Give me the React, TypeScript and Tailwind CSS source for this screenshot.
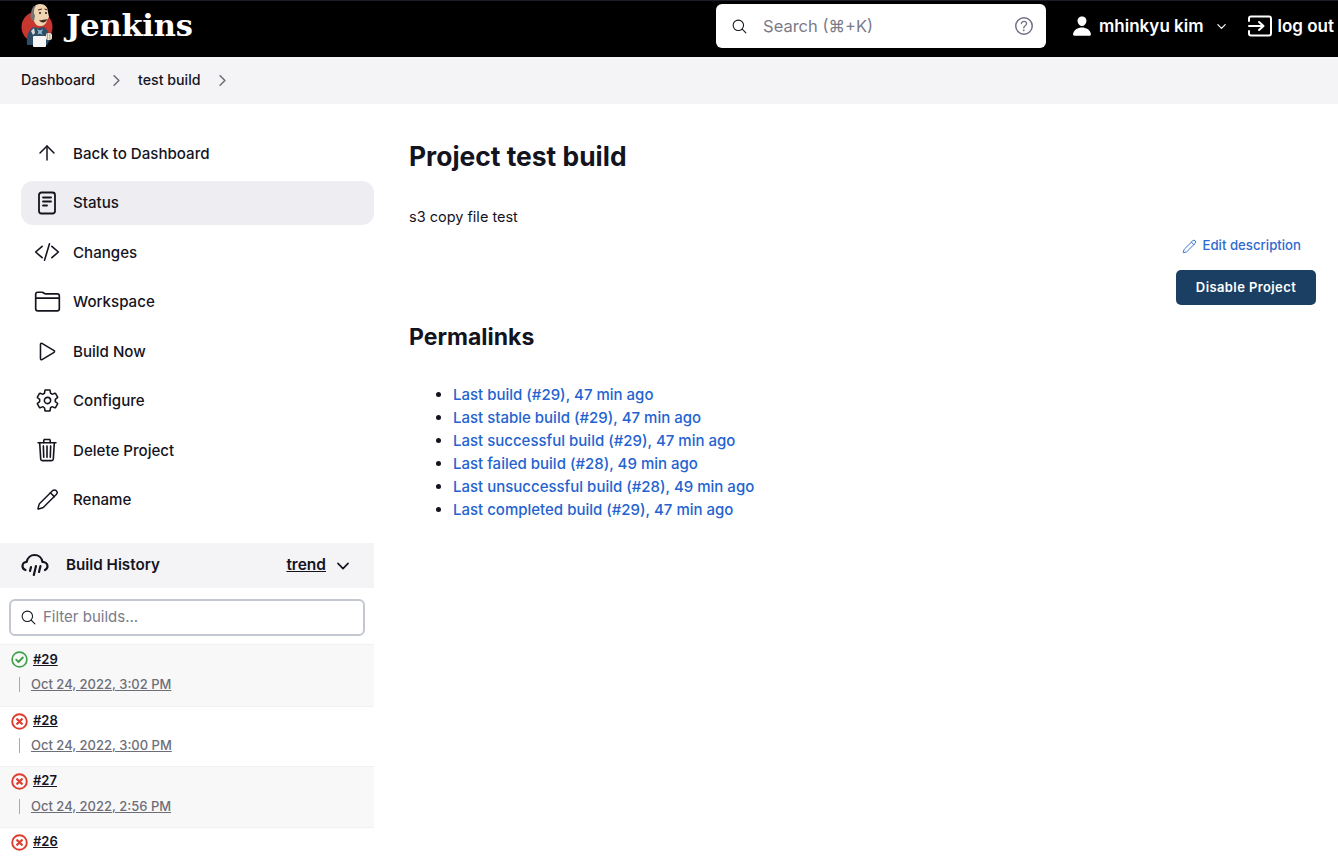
import React from "react";
import {
  IoCodeSlashOutline,
  IoFolderOutline,
  IoPlayOutline,
  IoSettingsOutline,
  IoTrashOutline,
  IoSearchOutline,
  IoHelpCircleOutline,
  IoChevronDownOutline,
  IoChevronForwardOutline,
  IoPerson,
} from "react-icons/io5";
import { ArrowUp, Pencil } from "lucide-react";

function Logo() {
  return (
    <svg width="34" height="46" viewBox="19 3 34 46" className="shrink-0">
      <circle cx="37" cy="27" r="15.500" fill="#c8372f" />
      <path d="M27 45c-1-8 1-14 6-18l5 1 6-1 3 3c2 3 3 6 3 10l-3 5z" fill="#2f4c66" />
      <path d="M32 14c0-6 3-10 8-10s8 3 8 8l1 5-2 3c-1 4-3 6-7 6-3 0-5-2-6-5l-2-3z" fill="#f0d3b0" />
      <path d="M34 6c-2 2-3 5-3 8l-1 2 2 4 2 1 1-5-1-3c0-3 0-5 2-7z" fill="#77736f" />
      <path d="M39 20c2 .5 5 0 8-1-.5 2-2 3.500-4 3.500s-3-1-4-2.500z" fill="#3a2a22" />
      <circle cx="40" cy="13" r="1" fill="#1d1919" />
      <circle cx="46" cy="13" r="1" fill="#1d1919" />
      <path d="M38 10l4-1M44.500 9l3 1" stroke="#49230f" strokeWidth="1" fill="none" />
      <path d="M37 29l3 1.500 3-1.500-1.500 3.500 1 2.500-2.500-1.500-2.500 1 1-2.500z" fill="#8fb8cf" />
      <path d="M31 31l3-3 1 5-2 2z" fill="#d8d8d8" />
      <rect x="33" y="36" width="13" height="11" rx="1" fill="#f5f5f5" />
      <rect x="46" y="33" width="6" height="7" rx="2" fill="#efe3d0" />
      <path d="M47.500 33.500v6M49.800 33.500v6" stroke="#8a8a8a" strokeWidth=".7" />
    </svg>
  );
}

function DocIcon() {
  return (
    <svg width="24" height="24" viewBox="0 0 24 24" fill="none" stroke="currentColor" strokeWidth="1.800" strokeLinecap="round" strokeLinejoin="round">
      <rect x="4" y="1.500" width="16" height="21" rx="2.500" />
      <path d="M8 6.500h8M8 10.500h8M8 14.500h4" />
    </svg>
  );
}

function LogoutIcon() {
  return (
    <svg width="26" height="22" viewBox="0 0 26 22" fill="none" stroke="white" strokeWidth="2" strokeLinecap="round" strokeLinejoin="round" className="shrink-0">
      <path d="M2 6V3.500C2 2.400 2.900 1.500 4 1.500h18c1.100 0 2 .9 2 2v15c0 1.100-.9 2-2 2H4c-1.100 0-2-.9-2-2V16" />
      <path d="M2 11h14M12 7l4.500 4-4.500 4" />
    </svg>
  );
}

function CloudRain() {
  return (
    <svg width="28" height="26" viewBox="0 0 28 26" fill="none" stroke="#14141f" strokeWidth="2.200" strokeLinecap="round" strokeLinejoin="round">
      <path d="M4.500 17C2.500 16.300 1.500 14.800 1.500 13c0-2.300 1.800-4.200 4.200-4.200C6.500 5 9.500 2 13.500 2c4.300 0 7.400 3 7.900 6.800 2.800 0 5.100 1.800 5.100 4.500 0 1.700-1 3-2.500 3.700" />
      <path d="M10 14l-1 4M15 13l-2.200 9M19.500 13l-1.500 6" />
    </svg>
  );
}

function StatusOk() {
  return (
    <svg width="17" height="17" viewBox="0 0 17 17" fill="none" className="shrink-0">
      <circle cx="8.500" cy="8.500" r="7.400" stroke="#3fa14b" strokeWidth="1.700" />
      <path d="M5.200 8.700l2.300 2.300 4.300-4.500" stroke="#3fa14b" strokeWidth="1.900" strokeLinecap="round" strokeLinejoin="round" />
    </svg>
  );
}

function StatusFail() {
  return (
    <svg width="17" height="17" viewBox="0 0 17 17" fill="none" className="mt-[2px] shrink-0">
      <circle cx="8.500" cy="8.500" r="7.300" stroke="#dc3d2f" strokeWidth="1.900" />
      <path d="M6.200 6.200l4.600 4.600M10.800 6.200l-4.600 4.600" stroke="#dc3d2f" strokeWidth="2.300" strokeLinecap="round" />
    </svg>
  );
}

const nav = [
  { label: "Back to Dashboard", icon: <ArrowUp size={24} strokeWidth={1.500} /> },
  { label: "Status", icon: <DocIcon />, active: true },
  { label: "Changes", icon: <IoCodeSlashOutline size={26} /> },
  { label: "Workspace", icon: <IoFolderOutline size={27} /> },
  { label: "Build Now", icon: <IoPlayOutline size={25} /> },
  { label: "Configure", icon: <IoSettingsOutline size={25} /> },
  { label: "Delete Project", icon: <IoTrashOutline size={26} /> },
  { label: "Rename", icon: <Pencil size={23} strokeWidth={1.500} /> },
];

const builds = [
  { id: "#29", date: "Oct 24, 2022, 3:02 PM", ok: true, h: "h-[62px] bg-[#f8f8f8] pt-[6px]", gap: "mt-[7px]" },
  { id: "#28", date: "Oct 24, 2022, 3:00 PM", ok: false, h: "h-[60px] bg-white pt-[5px]", gap: "mt-[7px]" },
  { id: "#27", date: "Oct 24, 2022, 2:56 PM", ok: false, h: "h-[61px] bg-[#f8f8f8] pt-[5px]", gap: "mt-[8px]" },
  { id: "#26", date: "", ok: false, h: "h-[61px] bg-white pt-[5px]", gap: "mt-[8px]" },
];

const links = [
  "Last build (#29), 47 min ago",
  "Last stable build (#29), 47 min ago",
  "Last successful build (#29), 47 min ago",
  "Last failed build (#28), 49 min ago",
  "Last unsuccessful build (#28), 49 min ago",
  "Last completed build (#29), 47 min ago",
];

export default function App() {
  return (
    <div className="h-[858px] w-[1338px] overflow-hidden bg-white text-[#14141f] font-['Inter',sans-serif]">
      <header className="flex h-[57px] items-center border-t border-[#1c1c2b] bg-black pb-[6px] pl-[19px] text-white">
        <Logo />
        <span className="ml-[13px] pb-[2px] font-['DejaVu_Serif',serif] text-[30.500px] font-bold leading-none tracking-[-0.2px]">Jenkins</span>
        <div className="ml-auto flex h-[44px] w-[330px] items-center rounded-[6px] bg-white pl-[15px] pr-[10px]">
          <IoSearchOutline size={17} className="text-[#14141f]" />
          <span className="ml-[15px] text-[16.500px] text-[#7b7b88]">Search (⌘+K)</span>
          <IoHelpCircleOutline size={24} className="ml-auto text-[#6f6f85]" />
        </div>
        <div className="ml-[25px] flex items-center">
          <IoPerson size={22} />
          <span className="ml-[6px] pt-[1px] text-[17px] font-semibold">mhinkyu kim</span>
          <IoChevronDownOutline size={13} className="ml-[11px]" />
          <span className="ml-[19px]"><LogoutIcon /></span>
          <span className="ml-[5px] mr-[4px] pt-[1px] text-[17px] font-semibold">log out</span>
        </div>
      </header>

      <nav className="flex h-[47px] items-center bg-[#f4f4f7] pb-[1px] pl-[21px] text-[14.200px] font-medium">
        <span>Dashboard</span>
        <IoChevronForwardOutline size={17} className="ml-[13px] text-[#6f6f7a]" />
        <span className="ml-[13px]">test build</span>
        <IoChevronForwardOutline size={17} className="ml-[13px] text-[#6f6f7a]" />
      </nav>

      <div className="flex">
        <aside className="w-[374px] shrink-0">
          <div className="flex flex-col pl-[21px] pt-[27px]">
            {nav.map((n) => (
              <div
                key={n.label}
                className={`mb-[5.500px] flex h-[44px] items-center rounded-[12px] text-[15.100px] font-[450] ${n.active ? "bg-[#eeeef2]" : ""}`}
              >
                <span className="flex w-[52px] shrink-0 items-center justify-center">{n.icon}</span>
                <span className="pt-[2px]">{n.label}</span>
              </div>
            ))}
          </div>

          <div className="mt-[16px] flex h-[45px] items-center bg-[#f4f4f7] pl-[21px] pr-[22px]">
            <CloudRain />
            <span className="ml-[17px] text-[15.200px] font-semibold">Build History</span>
            <span className="ml-auto pb-[1px] text-[15.500px] font-semibold underline">trend</span>
            <IoChevronDownOutline size={18} className="ml-[8px]" />
          </div>

          <div className="px-[9px] pt-[11px]">
            <div className="flex h-[37px] items-center rounded-[6px] border-2 border-[#c3c7cf] pl-[9px]">
              <IoSearchOutline size={17} />
              <span className="ml-[6px] text-[15px] text-[#7b7b88]">Filter builds...</span>
            </div>
          </div>

          <div className="mt-[8px]">
            {builds.map((b) => (
              <div key={b.id} className={`border-t border-[#f1f1f4] pl-[11px] ${b.h}`}>
                <div className="flex h-[17px] items-center">
                  {b.ok ? <StatusOk /> : <StatusFail />}
                  <span className="ml-[5px] text-[13px] font-semibold underline">{b.id}</span>
                </div>
                {b.date && (
                  <div className={`flex items-center pl-[8px] ${b.gap}`}>
                    <span className="h-[15px] w-px bg-[#a9a9b3]" />
                    <span className="ml-[11px] text-[13px] font-medium text-[#6e6e78] underline">{b.date}</span>
                  </div>
                )}
              </div>
            ))}
          </div>
        </aside>

        <main className="flex-1 pl-[35px] pr-[22px] pt-[34px]">
          <h1 className="text-[26.400px] font-bold leading-[36px]">Project test build</h1>
          <p className="mt-[33px] text-[14.500px] leading-[20px]">s3 copy file test</p>
          <div className="mt-[9px] flex flex-col items-end">
            <div className="mr-[15px] flex h-[20px] items-center text-[13.200px] font-medium text-[#2f6ad0]">
              <Pencil size={15} strokeWidth={1.500} />
              <span className="ml-[6px]">Edit description</span>
            </div>
            <div className="mt-[14px] flex h-[35px] w-[140px] items-center justify-center rounded-[5px] bg-[#1b3f63] text-[13px] font-semibold tracking-[0.4px] text-white">
              Disable Project
            </div>
          </div>
          <h2 className="mt-[14px] text-[23px] font-bold leading-[36px]">Permalinks</h2>
          <ul className="mt-[28px] list-disc pl-[44px] text-[15px] font-medium leading-[23px] text-[#2463cf] marker:text-[#14141f]">
            {links.map((l) => (
              <li key={l}>{l}</li>
            ))}
          </ul>
        </main>
      </div>
    </div>
  );
}
